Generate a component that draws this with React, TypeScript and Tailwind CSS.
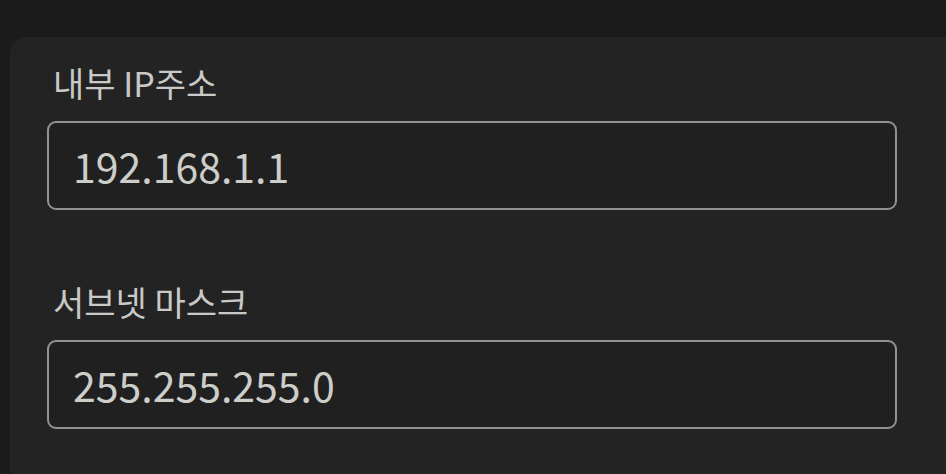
const font = { fontFamily: '"Noto Sans CJK KR", "Noto Sans", sans-serif' };

type FieldProps = {
  label: string;
  value: string;
};

function Field({ label, value }: FieldProps) {
  return (
    <div className="flex flex-col">
      <label className="pl-[6px] text-[34px] leading-[40px] text-[#c9c9c7]">{label}</label>
      <div className="mt-[18px] flex h-[89px] w-[850px] items-center rounded-[9px] border-2 border-[#929290] bg-[#202020] pl-[24px]">
        <span className="text-[41px] leading-none text-[#cdcdc9]">{value}</span>
      </div>
    </div>
  );
}

export default function App() {
  return (
    <div className="h-[474px] w-[946px] overflow-hidden bg-[#1b1b1b]" style={font}>
      <div className="ml-[10px] mt-[37px] h-[500px] w-[980px] rounded-tl-[16px] bg-[#232323] pl-[37px] pt-[26px]">
        <div className="flex flex-col gap-[72px]">
          <Field label="내부 IP주소" value="192.168.1.1" />
          <Field label="서브넷 마스크" value="255.255.255.0" />
        </div>
      </div>
    </div>
  );
}
